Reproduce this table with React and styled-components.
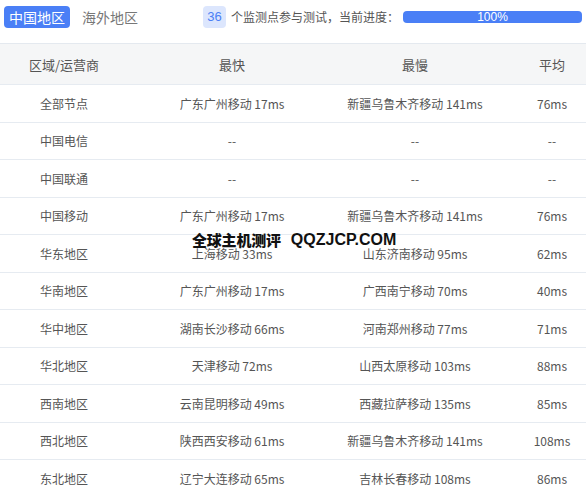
import React from "react";
import styled, { createGlobalStyle } from "styled-components";

const GlobalStyle = createGlobalStyle`
  html, body {
    margin: 0;
    padding: 0;
    background: #fff;
    overflow: hidden;
  }
  body {
    font-family: "Noto Sans CJK SC", "Liberation Sans", sans-serif;
  }
`;

const Page = styled.div`
  position: relative;
  width: 586px;
  height: 492px;
  overflow: hidden;
`;

const TopBar = styled.div`
  display: flex;
  align-items: center;
  height: 44px;
  padding: 0 0 0 4px;
  box-sizing: border-box;
  border-bottom: 1px solid #e4e9ef;
  white-space: nowrap;
`;

const Tab = styled.div`
  flex-shrink: 0;
  height: 22px;
  line-height: 22px;
  padding: 0 5px;
  margin-top: -10px;
  border-radius: 4px;
  font-size: 14px;
  color: ${(p) => (p.$active ? "#fff" : "#777")};
  background: ${(p) => (p.$active ? "#4a7ff6" : "transparent")};
  margin-right: ${(p) => (p.$active ? "7px" : "0")};
`;

const Status = styled.div`
  display: flex;
  flex-shrink: 0;
  align-items: center;
  margin-left: 60px;
  margin-top: -10px;
  font-size: 12px;
  color: #555;
`;

const Badge = styled.span`
  display: inline-block;
  width: 23px;
  height: 22px;
  line-height: 22px;
  text-align: center;
  border-radius: 4px;
  background: #dce6fd;
  color: #4a7ff6;
  font-family: "Liberation Sans", sans-serif;
  font-size: 13px;
  margin-right: 5px;
`;

const Progress = styled.div`
  flex-shrink: 0;
  width: 179px;
  height: 12px;
  margin-left: 4px;
  border-radius: 4px;
  background: #4a7ff6;
  color: #fff;
  font-family: "Liberation Sans", sans-serif;
  font-size: 12px;
  line-height: 12px;
  text-align: center;
`;

const Table = styled.div`
  width: 610px;
`;

const Row = styled.div`
  display: grid;
  grid-template-columns: 128px 208px 158px 116px;
  height: ${(p) => (p.$head ? "41px" : "37.5px")};
  align-items: center;
  box-sizing: border-box;
  border-bottom: 1px solid #e6ebf1;
  background: ${(p) => (p.$head ? "#f5f6f7" : "#fff")};
  font-size: ${(p) => (p.$head ? "13px" : "12px")};
  color: #555;
`;

const Cell = styled.div`
  text-align: center;
  white-space: nowrap;
`;

const Watermark = styled.div`
  position: absolute;
  left: 192px;
  top: 229px;
  display: flex;
  align-items: center;
  gap: 10px;
  color: #111;
  pointer-events: none;
`;

const MarkCn = styled.span`
  font-family: "Noto Sans CJK SC", sans-serif;
  font-weight: 900;
  font-size: 15px;
  letter-spacing: -0.2px;
`;

const MarkEn = styled.span`
  font-family: "Liberation Sans", sans-serif;
  font-weight: 700;
  font-size: 16px;
`;

const rows = [
  ["全部节点", "广东广州移动 17ms", "新疆乌鲁木齐移动 141ms", "76ms"],
  ["中国电信", "--", "--", "--"],
  ["中国联通", "--", "--", "--"],
  ["中国移动", "广东广州移动 17ms", "新疆乌鲁木齐移动 141ms", "76ms"],
  ["华东地区", "上海移动 33ms", "山东济南移动 95ms", "62ms"],
  ["华南地区", "广东广州移动 17ms", "广西南宁移动 70ms", "40ms"],
  ["华中地区", "湖南长沙移动 66ms", "河南郑州移动 77ms", "71ms"],
  ["华北地区", "天津移动 72ms", "山西太原移动 103ms", "88ms"],
  ["西南地区", "云南昆明移动 49ms", "西藏拉萨移动 135ms", "85ms"],
  ["西北地区", "陕西西安移动 61ms", "新疆乌鲁木齐移动 141ms", "108ms"],
  ["东北地区", "辽宁大连移动 65ms", "吉林长春移动 108ms", "86ms"],
];

export default function App() {
  return (
    <Page>
      <GlobalStyle />
      <TopBar>
        <Tab $active>中国地区</Tab>
        <Tab>海外地区</Tab>
        <Status>
          <Badge>36</Badge>
          个监测点参与测试，当前进度：
          <Progress>100%</Progress>
        </Status>
      </TopBar>
      <Table>
        <Row $head>
          <Cell>区域/运营商</Cell>
          <Cell>最快</Cell>
          <Cell>最慢</Cell>
          <Cell>平均</Cell>
        </Row>
        {rows.map((r) => (
          <Row key={r[0]}>
            {r.map((c, i) => (
              <Cell key={i}>{c}</Cell>
            ))}
          </Row>
        ))}
      </Table>
      <Watermark>
        <MarkCn>全球主机测评</MarkCn>
        <MarkEn>QQZJCP.COM</MarkEn>
      </Watermark>
    </Page>
  );
}
